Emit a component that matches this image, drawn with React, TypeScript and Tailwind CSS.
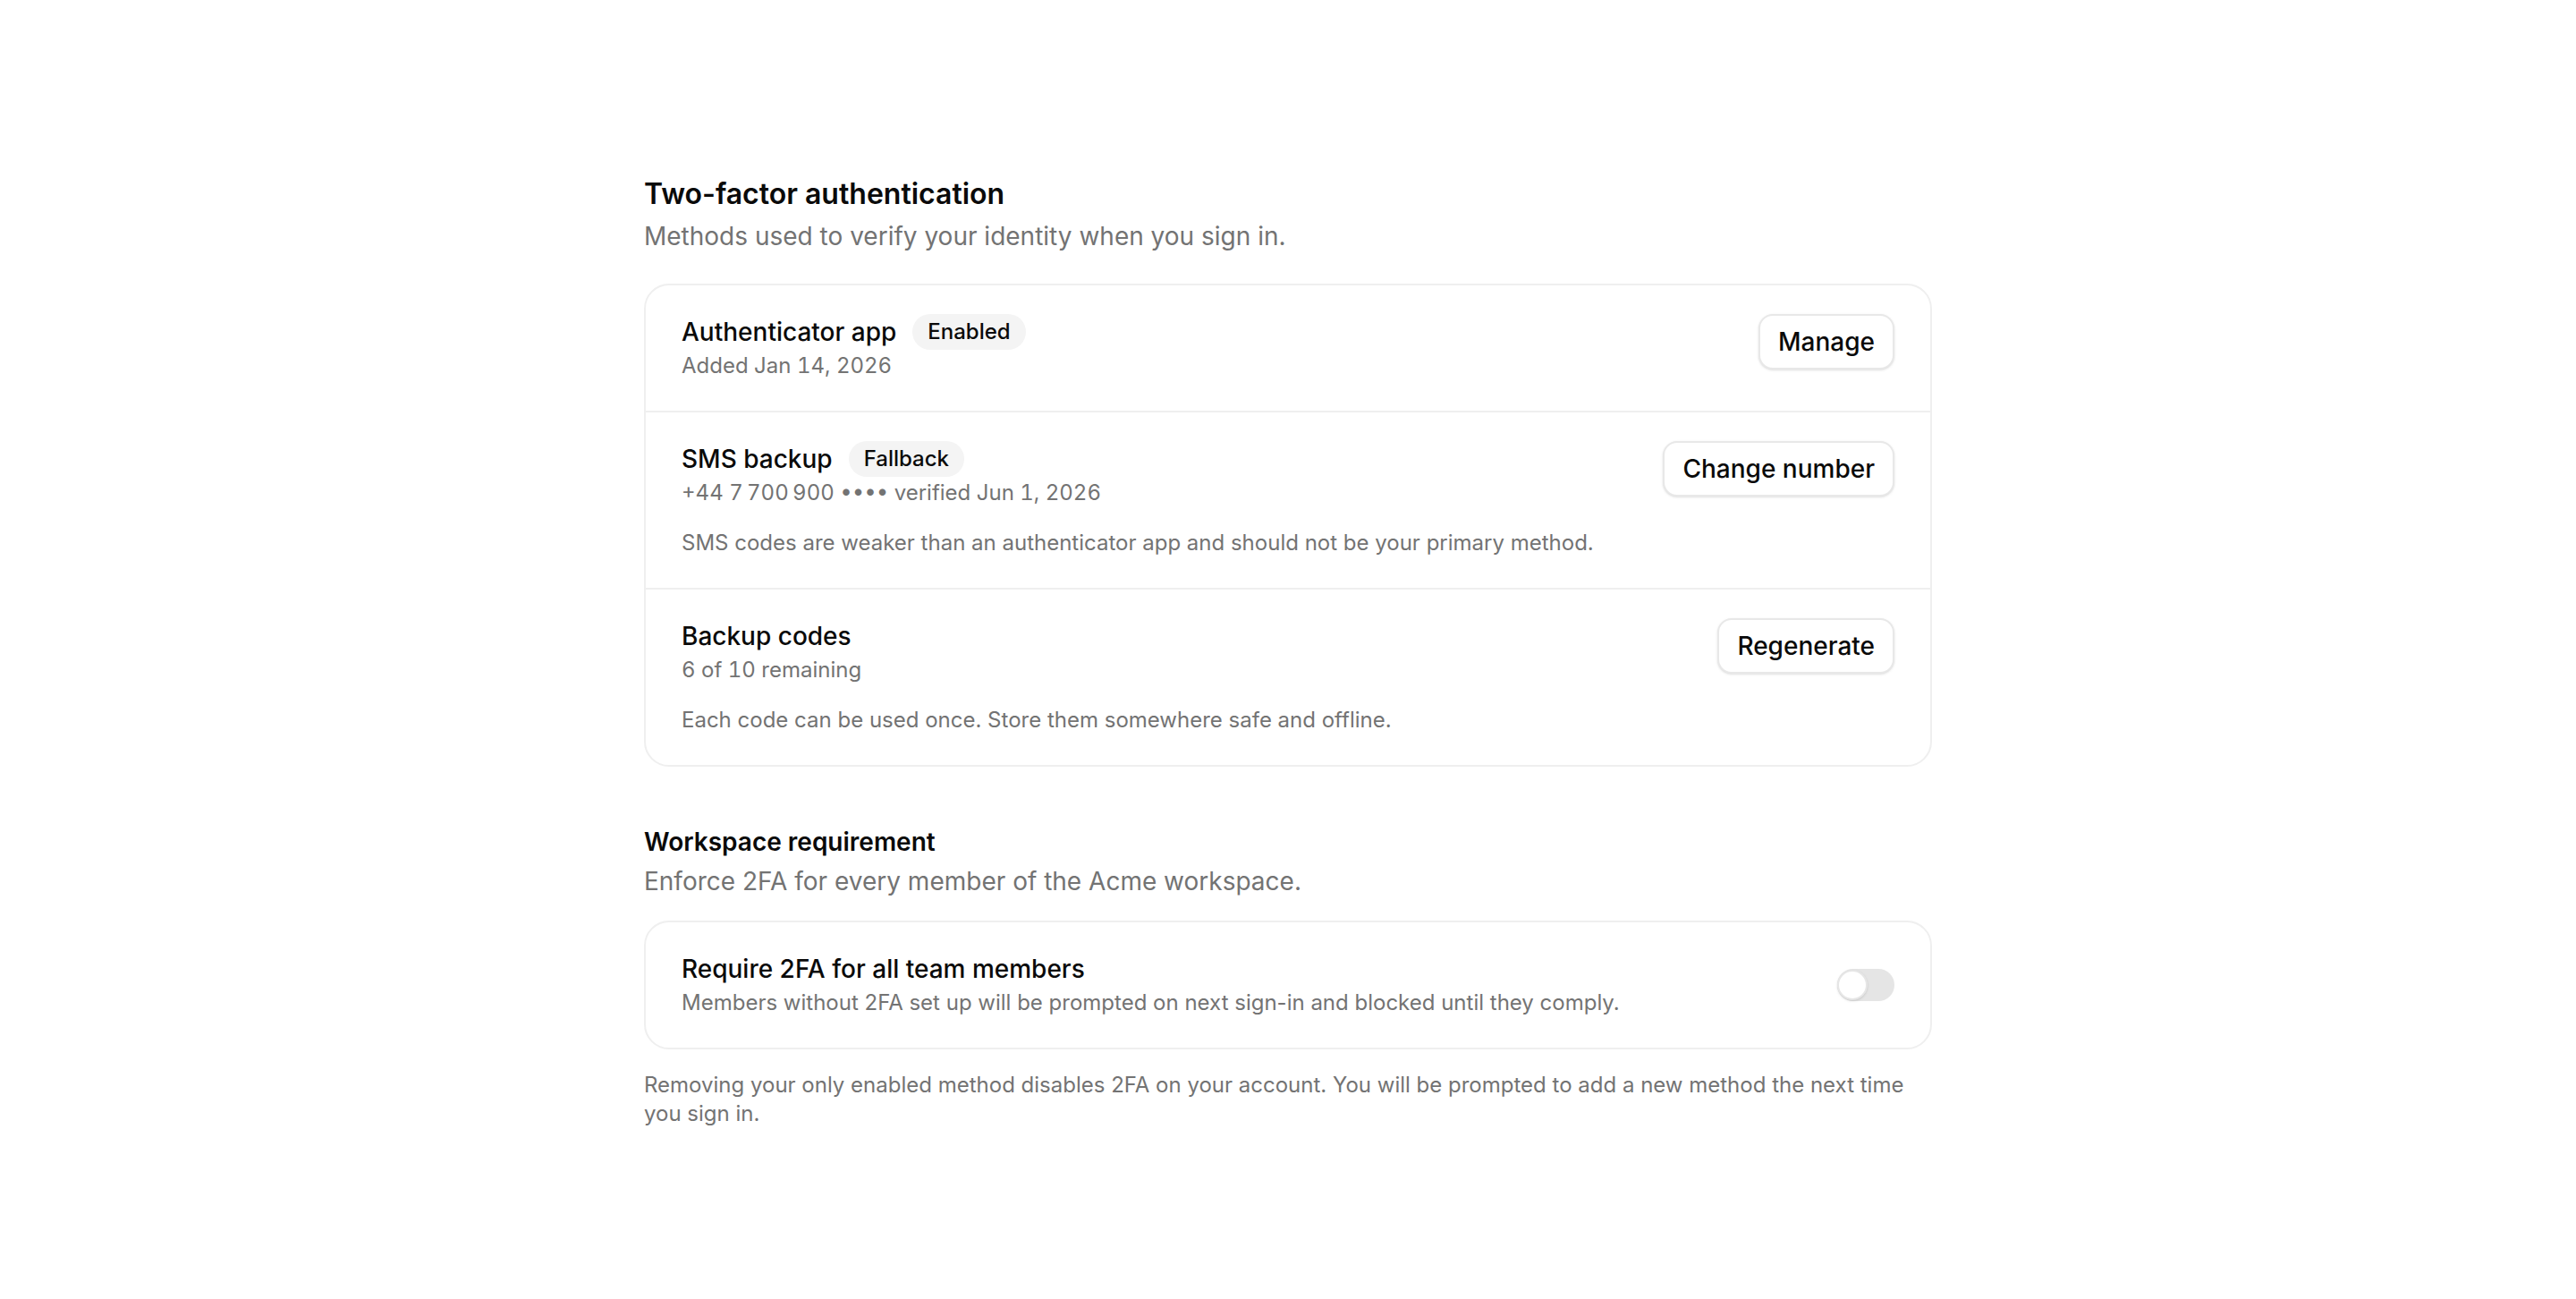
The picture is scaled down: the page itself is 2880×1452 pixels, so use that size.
import { useState } from 'react';

interface MethodRowProps {
  title: string;
  badge?: string;
  detail: string;
  note?: string;
  action: string;
}

function MethodRow({ title, badge, detail, note, action }: MethodRowProps) {
  return (
    <div className="flex items-start justify-between gap-8 border-t-2 border-[#efefef] px-10 py-8 first:border-t-0">
      <div className="min-w-0">
        <div className="flex items-center gap-[18px]">
          <span className="text-[28px] leading-10 font-medium text-[#0a0a0a]">{title}</span>
          {badge && (
            <span className="inline-flex h-10 items-center rounded-full bg-[#f4f4f4] px-[17px] text-[24px] font-medium text-[#0a0a0a]">
              {badge}
            </span>
          )}
        </div>
        <p className="text-[24px] leading-9 text-[#737373] tabular-nums">{detail}</p>
        {note && <p className="mt-5 text-[24px] leading-9 text-[#737373]">{note}</p>}
      </div>
      <button
        type="button"
        className="h-[62px] shrink-0 rounded-2xl border-2 border-[#e8e8e8] bg-white px-5 text-[28px] font-medium text-[#0a0a0a] shadow-sm"
      >
        {action}
      </button>
    </div>
  );
}

export default function App() {
  const [required, setRequired] = useState(false);

  return (
    <div className="min-h-screen bg-white font-['Inter',sans-serif] antialiased">
      <div className="mx-auto max-w-[1440px] pt-[195px] pb-32">
        <section>
          <h2 className="text-[32px] leading-[44px] font-semibold text-[#0a0a0a]">Two-factor authentication</h2>
          <p className="mt-[5px] text-[28px] leading-10 text-[#737373]">
            Methods used to verify your identity when you sign in.
          </p>
          <div className="mt-[33px] overflow-hidden rounded-[28px] border-2 border-[#efefef]">
            <MethodRow title="Authenticator app" badge="Enabled" detail="Added Jan 14, 2026" action="Manage" />
            <MethodRow
              title="SMS backup"
              badge="Fallback"
              detail={'+44 7\u2009700\u2009900 •••• verified Jun 1, 2026'}
              note="SMS codes are weaker than an authenticator app and should not be your primary method."
              action="Change number"
            />
            <MethodRow
              title="Backup codes"
              detail="6 of 10 remaining"
              note="Each code can be used once. Store them somewhere safe and offline."
              action="Regenerate"
            />
          </div>
        </section>

        <section className="mt-16">
          <h2 className="text-[28px] leading-10 font-semibold text-[#0a0a0a]">Workspace requirement</h2>
          <p className="mt-1 text-[28px] leading-10 text-[#737373]">
            Enforce 2FA for every member of the Acme workspace.
          </p>
          <div className="mt-6 flex items-center justify-between gap-8 rounded-[28px] border-2 border-[#efefef] px-10 py-8">
            <div>
              <p className="text-[28px] leading-10 font-medium text-[#0a0a0a]">Require 2FA for all team members</p>
              <p className="text-[24px] leading-9 text-[#737373]">
                Members without 2FA set up will be prompted on next sign-in and blocked until they comply.
              </p>
            </div>
            <button
              type="button"
              role="switch"
              aria-checked={required}
              onClick={() => setRequired(!required)}
              className={`relative h-9 w-16 shrink-0 rounded-full ${required ? 'bg-neutral-900' : 'bg-[#e5e5e5]'}`}
            >
              <span
                className={`absolute top-px left-0 h-[34px] w-[34px] rounded-full border-2 border-[#e6e6e6] bg-white shadow-sm ${
                  required ? 'translate-x-[30px]' : ''
                }`}
              />
            </button>
          </div>
        </section>

        <p className="mt-6 text-[24px] leading-8 text-[#737373]">
          Removing your only enabled method disables 2FA on your account. You will be prompted to add a new method the
          next time you sign in.
        </p>
      </div>
    </div>
  );
}
